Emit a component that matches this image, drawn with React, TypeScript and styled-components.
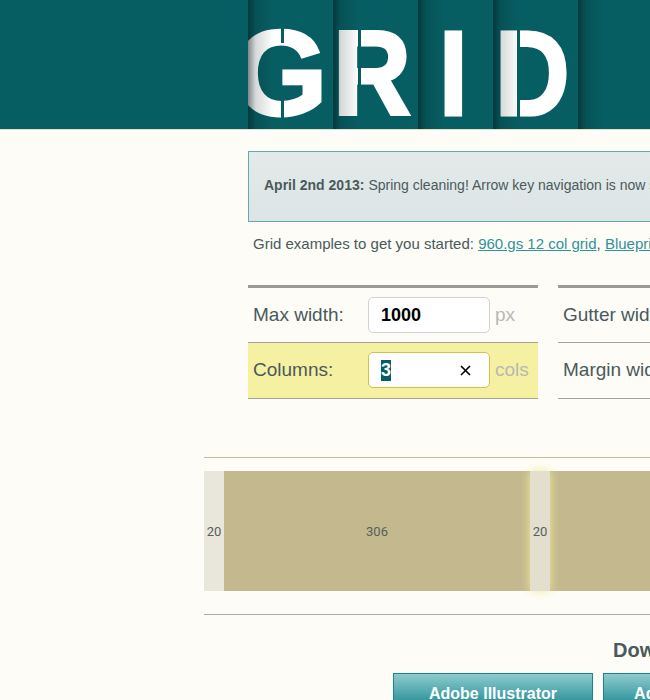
import { useEffect, useRef } from "react";
import styled, { createGlobalStyle } from "styled-components";

const GlobalStyle = createGlobalStyle`
  html, body {
    margin: 0;
    padding: 0;
    width: 650px;
    height: 700px;
    overflow: hidden;
    background: #fdfcf7;
    font-family: "Liberation Sans", Arial, sans-serif;
    color: #4a5a5c;
  }
`;

const Page = styled.div`
  width: 650px;
  height: 700px;
  overflow: hidden;
`;

const Header = styled.header`
  display: flex;
  height: 129px;
  padding-left: 248px;
  background: #075e62;
  border-bottom: 1px solid #e4e2c4;
`;

const HeaderCol = styled.div<{ $w: number; $clip?: boolean }>`
  position: relative;
  flex: none;
  box-sizing: border-box;
  width: ${(p) => p.$w}px;
  height: 129px;
  padding-top: 24px;
  overflow: ${(p) => (p.$clip ? "hidden" : "visible")};

  &::after {
    content: "";
    position: absolute;
    top: 0;
    bottom: 0;
    left: 0;
    width: 26px;
    background: linear-gradient(
      to right,
      rgba(0, 20, 22, 0.5),
      rgba(0, 20, 22, 0.16) 30%,
      rgba(0, 20, 22, 0)
    );
  }
`;

const Letter = styled.span<{ $left: number; $sx?: number }>`
  display: block;
  margin-left: ${(p) => p.$left}px;
  width: max-content;
  font-size: 120px;
  line-height: 99px;
  font-weight: 700;
  color: #fff;
  -webkit-text-stroke: 3px #fff;
  transform: scaleX(${(p) => p.$sx ?? 1});
  transform-origin: left center;
`;

/* stencil cuts over the logo letters */
const Cut = styled.i<{ $left: number; $top: number; $w: number; $h: number }>`
  position: absolute;
  left: ${(p) => p.$left}px;
  top: ${(p) => p.$top}px;
  width: ${(p) => p.$w}px;
  height: ${(p) => p.$h}px;
  background: #075e62;
`;

const Content = styled.main`
  padding-left: 248px;
`;

const Notice = styled.div`
  box-sizing: border-box;
  width: 960px;
  height: 71px;
  margin-top: 21px;
  padding: 0 0 3px 15px;
  display: flex;
  align-items: center;
  border: 1px solid #62aab0;
  background: linear-gradient(#e4eaea, #dce4e5);
  font-size: 14px;
  white-space: nowrap;

  b {
    margin-right: 4px;
  }
`;

const Examples = styled.p`
  margin: 13px 0 0 5px;
  font-size: 15px;
  line-height: 18px;
  white-space: nowrap;

  a {
    color: #2f9398;
    text-decoration: underline;
  }
`;

const FormGrid = styled.div`
  display: flex;
  gap: 20px;
  margin-top: 32px;
  width: 800px;
`;

const FormCol = styled.div`
  flex: none;
  width: 290px;
  border-top: 3px solid #9c9a94;
`;

const Row = styled.div<{ $active?: boolean; $low?: boolean }>`
  display: flex;
  align-items: center;
  box-sizing: border-box;
  height: ${(p) => (p.$low ? 56 : 55)}px;
  padding: 0 0 ${(p) => (p.$low ? 1 : 0)}px 5px;
  border-bottom: 1px solid #a3a299;
  background: ${(p) => (p.$active ? "#f5f0a2" : "transparent")};
  font-size: 19px;
  white-space: nowrap;
`;

const Label = styled.label`
  flex: none;
  width: 115px;
`;

const Field = styled.div<{ $active?: boolean }>`
  position: relative;
  flex: none;
  box-sizing: border-box;
  width: 122px;
  height: 36px;
  border: 1px solid ${(p) => (p.$active ? "#d2c24a" : "#d2d2d0")};
  border-radius: 5px;
  background: #fff;
`;

const Input = styled.input`
  box-sizing: border-box;
  display: block;
  width: 100%;
  height: 100%;
  padding: 0 12px;
  border: none;
  outline: none;
  background: transparent;
  font-family: "Liberation Sans", Arial, sans-serif;
  font-size: 18px;
  font-weight: 700;
  color: #000;

  &::selection {
    background: #075e62;
    color: #fff;
  }
`;

const Clear = styled.svg`
  position: absolute;
  right: 18px;
  top: 12px;
  width: 11px;
  height: 11px;
`;

const Unit = styled.span`
  margin-left: 5px;
  font-size: 19px;
  color: #b8b8b4;
`;

const Preview = styled.section`
  margin: 58px 0 0 204px;
  width: 1000px;
  padding: 13px 0 23px;
  border-top: 1px solid #c4bb94;
  border-bottom: 1px solid #aeac9e;
`;

const Bars = styled.div`
  display: flex;
  height: 120px;
`;

const Bar = styled.div<{ $w: number; $kind: "col" | "gutter" | "hot" }>`
  position: relative;
  flex: none;
  width: ${(p) => p.$w}px;
  display: flex;
  align-items: center;
  justify-content: center;
  font-family: Roboto, "Noto Sans", sans-serif;
  font-size: 13px;
  color: #56605c;
  background: ${(p) =>
    p.$kind === "col" ? "#c4b98e" : p.$kind === "hot" ? "#e3dece" : "#e9e6dc"};
  box-shadow: ${(p) => (p.$kind === "hot" ? "0 0 10px #f2eb9a" : "none")};
  z-index: ${(p) => (p.$kind === "hot" ? 1 : 0)};
`;

const Download = styled.section`
  margin-left: 393px;
  width: 800px;
`;

const DownloadTitle = styled.h2`
  margin: 24px 0 0 220px;
  font-size: 20px;
  line-height: 23px;
  font-weight: 700;
  color: #4a5a5c;
`;

const Buttons = styled.div`
  display: flex;
  gap: 10px;
  margin-top: 11px;
`;

const DownloadButton = styled.a`
  flex: none;
  box-sizing: border-box;
  width: 200px;
  height: 44px;
  padding-top: 11px;
  text-align: center;
  border: 1px solid #14888f;
  background: linear-gradient(#8fcbce, #2a9298 70%);
  font-size: 16px;
  line-height: 18px;
  font-weight: 700;
  color: #fff;
`;

export default function App() {
  const colsRef = useRef<HTMLInputElement>(null);

  useEffect(() => {
    colsRef.current?.focus();
    colsRef.current?.select();
  }, []);

  return (
    <Page>
      <GlobalStyle />
      <Header>
        <HeaderCol $w={85} $clip>
          <Letter $left={-14}>G</Letter>
          <Cut $left={33} $top={26} $w={3} $h={17} />
          <Cut $left={33} $top={100} $w={3} $h={19} />
        </HeaderCol>
        <HeaderCol $w={85}>
          <Letter $left={0} $sx={0.9}>R</Letter>
          <Cut $left={25} $top={26} $w={3} $h={93} />
        </HeaderCol>
        <HeaderCol $w={75}>
          <Letter $left={21} $sx={0.86}>I</Letter>
        </HeaderCol>
        <HeaderCol $w={85}>
          <Letter $left={2} $sx={0.86}>D</Letter>
          <Cut $left={24} $top={26} $w={3} $h={93} />
        </HeaderCol>
        <HeaderCol $w={85} />
      </Header>

      <Content>
        <Notice>
          <b>April 2nd 2013:</b> Spring cleaning! Arrow key navigation is now supported.
        </Notice>
        <Examples>
          Grid examples to get you started: <a>960.gs 12 col grid</a>, <a>Blueprint</a>
        </Examples>
        <FormGrid>
          <FormCol>
            <Row>
              <Label>Max width:</Label>
              <Field>
                <Input defaultValue="1000" />
              </Field>
              <Unit>px</Unit>
            </Row>
            <Row $active $low>
              <Label>Columns:</Label>
              <Field $active>
                <Input ref={colsRef} defaultValue="3" />
                <Clear viewBox="0 0 11 11">
                  <path d="M1 1l9 9M10 1l-9 9" stroke="#000" strokeWidth="1.6" fill="none" />
                </Clear>
              </Field>
              <Unit>cols</Unit>
            </Row>
          </FormCol>
          <FormCol>
            <Row>
              <Label>Gutter width:</Label>
            </Row>
            <Row $low>
              <Label>Margin width:</Label>
            </Row>
          </FormCol>
        </FormGrid>
      </Content>

      <Preview>
        <Bars>
          <Bar $w={20} $kind="gutter">20</Bar>
          <Bar $w={306} $kind="col">306</Bar>
          <Bar $w={20} $kind="hot">20</Bar>
          <Bar $w={306} $kind="col">306</Bar>
        </Bars>
      </Preview>

      <Download>
        <DownloadTitle>Download</DownloadTitle>
        <Buttons>
          <DownloadButton>Adobe Illustrator</DownloadButton>
          <DownloadButton>Adobe Photoshop</DownloadButton>
        </Buttons>
      </Download>
    </Page>
  );
}
